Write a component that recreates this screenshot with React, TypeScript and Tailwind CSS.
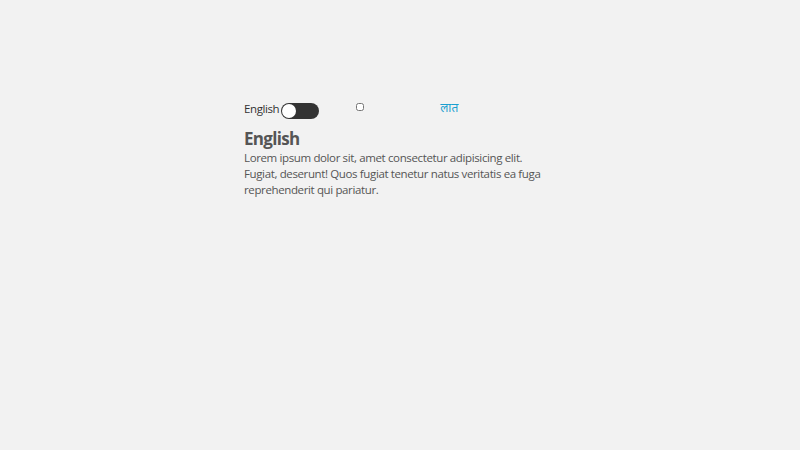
export default function App() {
  return (
    <div
      className="w-[800px] h-[450px] bg-[#f2f2f2] text-[#555]"
      style={{ fontFamily: '"Open Sans", "Noto Sans", sans-serif' }}
    >
      <div className="pl-[244px] pt-[100px] w-[560px]">
        <div className="flex items-center h-[20px]">
          <span className="mt-[-3px] text-[11.5px] tracking-[-0.4px] text-[#333] leading-none">English</span>
          <span className="ml-[2px] mt-[2px] w-[38px] h-[16px] rounded-full bg-[#333] flex items-center px-[1px]">
            <span className="w-[14px] h-[14px] rounded-full bg-white" />
          </span>
          <input type="checkbox" className="ml-[37px] mt-[-6px] w-[8px] h-[8px]" />
          <span
            className="ml-[76px] mt-[-4px] text-[12px] text-[#1a9fd0]"
            style={{ fontFamily: '"Noto Sans", "Noto Sans Devanagari", sans-serif' }}
          >
            लात
          </span>
        </div>
        <h1 className="mt-[8px] text-[17px] tracking-[-0.7px] font-bold leading-[22px] text-[#555]">English</h1>
        <p className="text-[11.5px] tracking-[-0.37px] leading-[16px] w-[300px]">
          Lorem ipsum dolor sit, amet consectetur adipisicing elit. Fugiat, deserunt! Quos fugiat tenetur
          natus veritatis ea fuga reprehenderit qui pariatur.
        </p>
      </div>
    </div>
  );
}
